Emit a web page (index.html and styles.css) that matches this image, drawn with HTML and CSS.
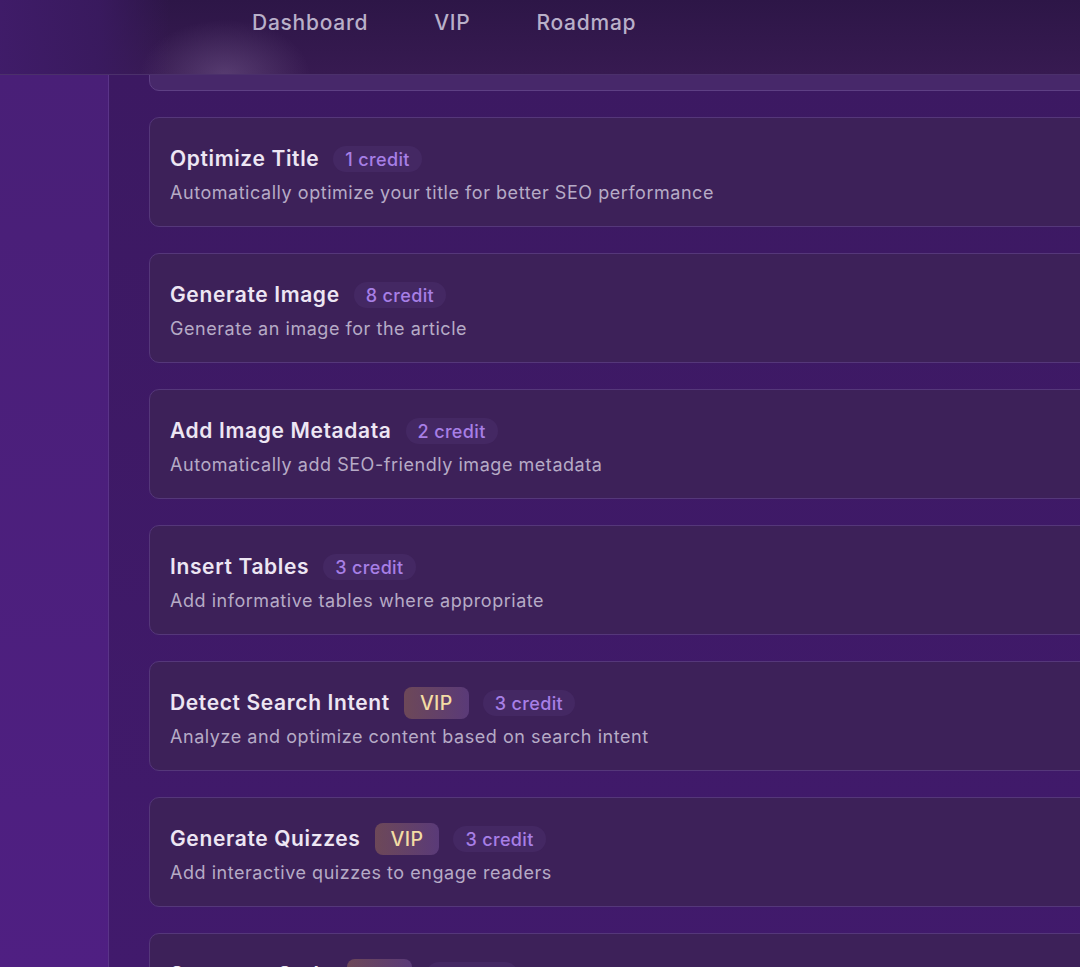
FILE: index.html
```html
<!DOCTYPE html>
<html lang="en">
<head>
<meta charset="utf-8">
<title>Features</title>
<link rel="stylesheet" href="styles.css">
</head>
<body>
<header class="topbar">
  <nav class="nav">
    <a class="nav-link" href="#">Dashboard</a>
    <a class="nav-link" href="#">VIP</a>
    <a class="nav-link" href="#">Roadmap</a>
  </nav>
</header>
<div class="layout">
  <aside class="sidebar"></aside>
  <main class="main">
    <div class="feature-list">
      <section class="card card-active" aria-hidden="true"></section>
      <section class="card">
        <div class="card-head"><h3 class="card-title">Optimize Title</h3><span class="badge-credit">1 credit</span></div>
        <p class="card-desc">Automatically optimize your title for better SEO performance</p>
      </section>
      <section class="card">
        <div class="card-head"><h3 class="card-title">Generate Image</h3><span class="badge-credit">8 credit</span></div>
        <p class="card-desc">Generate an image for the article</p>
      </section>
      <section class="card">
        <div class="card-head"><h3 class="card-title">Add Image Metadata</h3><span class="badge-credit">2 credit</span></div>
        <p class="card-desc">Automatically add SEO-friendly image metadata</p>
      </section>
      <section class="card">
        <div class="card-head"><h3 class="card-title">Insert Tables</h3><span class="badge-credit">3 credit</span></div>
        <p class="card-desc">Add informative tables where appropriate</p>
      </section>
      <section class="card">
        <div class="card-head"><h3 class="card-title">Detect Search Intent</h3><span class="badge-vip">VIP</span><span class="badge-credit">3 credit</span></div>
        <p class="card-desc">Analyze and optimize content based on search intent</p>
      </section>
      <section class="card">
        <div class="card-head"><h3 class="card-title">Generate Quizzes</h3><span class="badge-vip">VIP</span><span class="badge-credit">3 credit</span></div>
        <p class="card-desc">Add interactive quizzes to engage readers</p>
      </section>
      <section class="card">
        <div class="card-head"><h3 class="card-title">Summary Style</h3><span class="badge-vip">VIP</span><span class="badge-credit">2 credit</span></div>
        <p class="card-desc">Add a summary to the article</p>
      </section>
    </div>
  </main>
</div>
</body>
</html>
```

FILE: styles.css
```css
* { box-sizing: border-box; }

html, body {
  margin: 0;
  padding: 0;
  height: 100%;
  overflow: hidden;
  background: #3d1a66;
  font-family: Inter, "Noto Sans", "Liberation Sans", sans-serif;
}

.topbar {
  position: relative;
  height: 75px;
  border-bottom: 1px solid #4b306b;
  background:
    radial-gradient(ellipse 85px 55px at 225px 75px, rgba(125, 100, 150, 0.45), rgba(125, 100, 150, 0) 100%),
    linear-gradient(90deg, rgba(64, 28, 106, 0.95) 0px, rgba(58, 26, 96, 0.9) 100px, rgba(50, 24, 82, 0) 170px),
    linear-gradient(180deg, #2d1647 0%, #371a51 100%);
  display: flex;
  align-items: flex-start;
  z-index: 2;
}

.nav {
  display: flex;
  gap: 66px;
  padding-left: 252px;
  padding-top: 10px;
}

.nav-link {
  color: #b9b0c9;
  text-decoration: none;
  font-size: 21px;
  font-weight: 500;
  line-height: 26px;
  letter-spacing: 0.035em;
}

.layout {
  display: flex;
  height: calc(100% - 75px);
}

.sidebar {
  flex: 0 0 109px;
  border-right: 1px solid #5a3488;
  background: linear-gradient(180deg, #491f77 0%, #4f1f82 100%);
}

.main {
  flex: 1;
  overflow: hidden;
  background: linear-gradient(180deg, #3c1962 0%, #411a6c 100%);
}

.feature-list {
  display: flex;
  flex-direction: column;
  gap: 26px;
  margin-top: -94px;
  padding-left: 40px;
}

.card {
  width: 1000px;
  height: 110px;
  flex: 0 0 110px;
  border: 1px solid #55377a;
  border-radius: 10px;
  background: #3d2159;
  padding: 29px 20px 0;
}

.card-active {
  background: #47286a;
  border-color: #5e3f84;
}

.card-head {
  display: flex;
  align-items: center;
  gap: 14px;
  height: 24px;
}

.card-title {
  margin: 0;
  font-size: 21px;
  font-weight: 600;
  color: #ede6f3;
  line-height: 24px;
  letter-spacing: 0.03em;
}

.badge-credit {
  display: inline-flex;
  align-items: center;
  height: 26px;
  padding: 0 12px;
  border-radius: 13px;
  background: #442863;
  color: #a77fe6;
  font-size: 18px;
  font-weight: 500;
  letter-spacing: 0.02em;
}

.badge-vip {
  display: inline-flex;
  align-items: center;
  height: 32px;
  padding: 0 16px;
  border-radius: 8px;
  background: linear-gradient(90deg, #6d4858 0%, #5a3a78 100%);
  color: #f3dca4;
  font-size: 19.5px;
  font-weight: 500;
  letter-spacing: 0.02em;
}

.card-desc {
  margin: 10px 0 0;
  font-size: 18px;
  line-height: 24px;
  color: #b6abc6;
  letter-spacing: 0.03em;
}
```
